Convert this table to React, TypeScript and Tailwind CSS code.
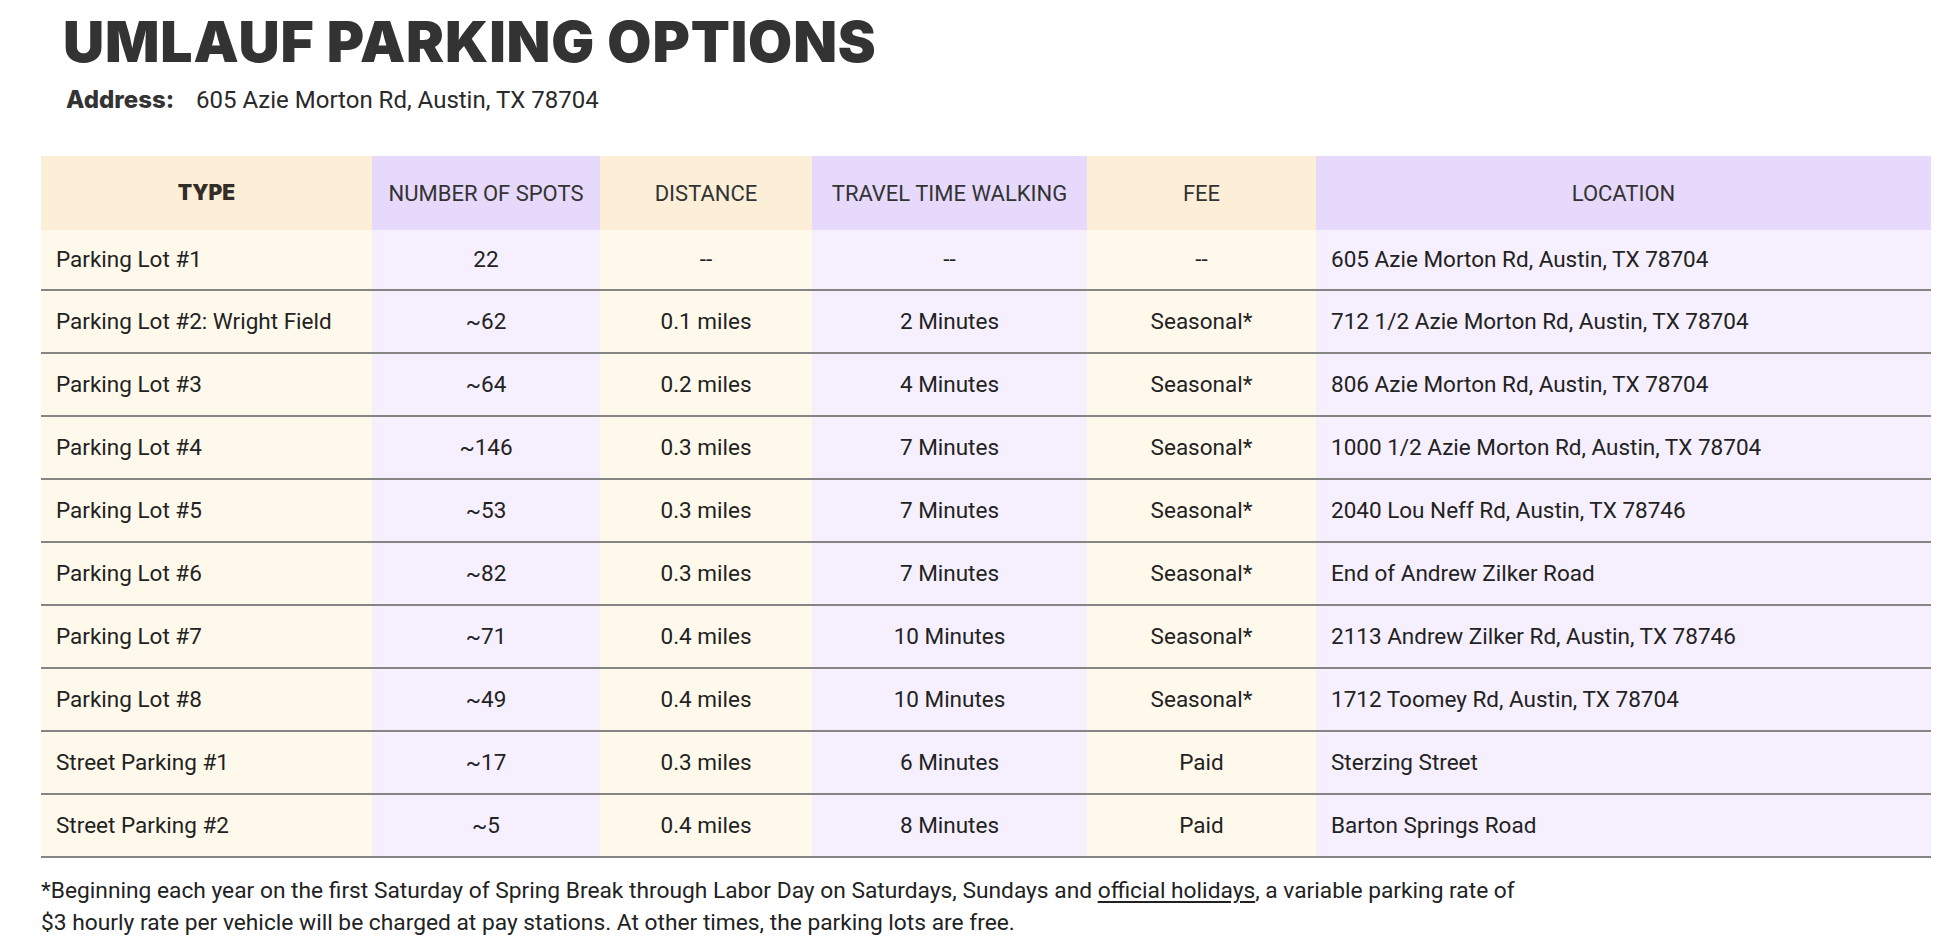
import React from 'react';

type Row = {
  type: string;
  spots: string;
  distance: string;
  travel: string;
  fee: string;
  location: string;
};

const rows: Row[] = [
  { type: 'Parking Lot #1', spots: '22', distance: '--', travel: '--', fee: '--', location: '605 Azie Morton Rd, Austin, TX 78704' },
  { type: 'Parking Lot #2: Wright Field', spots: '~62', distance: '0.1 miles', travel: '2 Minutes', fee: 'Seasonal*', location: '712 1/2 Azie Morton Rd, Austin, TX 78704' },
  { type: 'Parking Lot #3', spots: '~64', distance: '0.2 miles', travel: '4 Minutes', fee: 'Seasonal*', location: '806 Azie Morton Rd, Austin, TX 78704' },
  { type: 'Parking Lot #4', spots: '~146', distance: '0.3 miles', travel: '7 Minutes', fee: 'Seasonal*', location: '1000 1/2 Azie Morton Rd, Austin, TX 78704' },
  { type: 'Parking Lot #5', spots: '~53', distance: '0.3 miles', travel: '7 Minutes', fee: 'Seasonal*', location: '2040 Lou Neff Rd, Austin, TX 78746' },
  { type: 'Parking Lot #6', spots: '~82', distance: '0.3 miles', travel: '7 Minutes', fee: 'Seasonal*', location: 'End of Andrew Zilker Road' },
  { type: 'Parking Lot #7', spots: '~71', distance: '0.4 miles', travel: '10 Minutes', fee: 'Seasonal*', location: '2113 Andrew Zilker Rd, Austin, TX 78746' },
  { type: 'Parking Lot #8', spots: '~49', distance: '0.4 miles', travel: '10 Minutes', fee: 'Seasonal*', location: '1712 Toomey Rd, Austin, TX 78704' },
  { type: 'Street Parking #1', spots: '~17', distance: '0.3 miles', travel: '6 Minutes', fee: 'Paid', location: 'Sterzing Street' },
  { type: 'Street Parking #2', spots: '~5', distance: '0.4 miles', travel: '8 Minutes', fee: 'Paid', location: 'Barton Springs Road' },
];

const cols = 'grid grid-cols-[331px_228px_212px_275px_229px_615px]';

export default function App() {
  return (
    <div className="min-h-screen bg-white text-[#222] font-['Roboto',sans-serif] pt-[13px] pl-[41px]">
      {/* heading */}
      <h1 className="ml-[22px] text-[57px] leading-none font-black tracking-[0.015em] text-[#333] font-['Inter',sans-serif]">
        UMLAUF PARKING OPTIONS
      </h1>
      <div className="ml-[25px] mt-[14px] flex items-baseline text-[24px] leading-[32px]">
        <span className="font-extrabold text-[#333] font-['Inter',sans-serif]">Address:</span>
        <span className="ml-[22px] text-[#2a2a2a]">605 Azie Morton Rd, Austin, TX 78704</span>
      </div>

      {/* table */}
      <div className="mt-[40px] w-[1890px]">
        <div className={`${cols} h-[74px] text-[22px] text-[#333]`}>
          <div className="bg-[#fdefd7] flex items-center justify-center font-black text-[21px] text-[#332d28] font-['Inter',sans-serif]">TYPE</div>
          <div className="bg-[#e6d9fc] flex items-center justify-center">NUMBER OF SPOTS</div>
          <div className="bg-[#fdefd7] flex items-center justify-center">DISTANCE</div>
          <div className="bg-[#e6d9fc] flex items-center justify-center">TRAVEL TIME WALKING</div>
          <div className="bg-[#fdefd7] flex items-center justify-center">FEE</div>
          <div className="bg-[#e6d9fc] flex items-center justify-center">LOCATION</div>
        </div>
        {rows.map((r, i) => (
          <div
            key={r.type}
            className={`${cols} ${i === 0 ? 'h-[61px]' : 'h-[63px]'} border-b-[2px] border-[#858585] text-[22.5px]`}
          >
            <div className="bg-[#fff9ec] flex items-center pl-[15px]">{r.type}</div>
            <div className="bg-[#f6f0fe] flex items-center justify-center">{r.spots}</div>
            <div className="bg-[#fff9ec] flex items-center justify-center">{r.distance}</div>
            <div className="bg-[#f6f0fe] flex items-center justify-center">{r.travel}</div>
            <div className="bg-[#fff9ec] flex items-center justify-center">{r.fee}</div>
            <div className="bg-[#f6f0fe] flex items-center pl-[15px]">{r.location}</div>
          </div>
        ))}
      </div>

      {/* footnote */}
      <p className="mt-[17px] text-[22.75px] leading-[32px] text-[#222]">
        *Beginning each year on the first Saturday of Spring Break through Labor Day on Saturdays, Sundays and{' '}
        <span className="underline underline-offset-[3px]">official holidays</span>, a variable parking rate of
        <br />
        $3 hourly rate per vehicle will be charged at pay stations. At other times, the parking lots are free.
      </p>
    </div>
  );
}
